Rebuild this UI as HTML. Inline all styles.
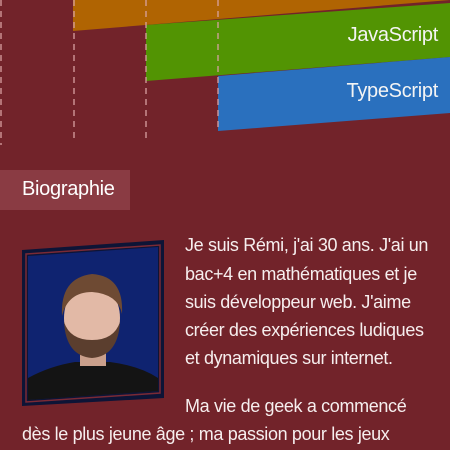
<!DOCTYPE html>
<html><head><meta charset="utf-8"><style>
html,body{margin:0;padding:0}
body{width:450px;height:450px;overflow:hidden;background:#72232a;position:relative;font-family:"Liberation Sans",Arial,sans-serif;color:#f6eeee}
.abs{position:absolute}
.t{position:absolute;white-space:nowrap;font-size:18px;letter-spacing:-0.35px;line-height:20px}
</style></head><body>
<svg class="abs" style="left:0;top:0" width="450" height="150">
<polygon points="73,0 450,0 450,0 73,31" fill="#b06402"/>
<polygon points="146,25 450,3 450,57 146,81" fill="#529403"/>
<polygon points="218,76 450,57 450,113 218,131" fill="#2a70be"/>
<g stroke="#d9a3a3" stroke-width="1.5" stroke-dasharray="6,5" opacity="0.85">
<line x1="1" y1="0" x2="1" y2="145"/>
<line x1="74" y1="0" x2="74" y2="142"/>
<line x1="146" y1="0" x2="146" y2="138"/>
<line x1="218" y1="0" x2="218" y2="131"/>
</g>
<text x="438" y="41" fill="#f4f4f4" font-size="20" text-anchor="end" font-family="Liberation Sans" letter-spacing="-0.3">JavaScript</text>
<text x="438" y="97" fill="#f4f4f4" font-size="20" text-anchor="end" font-family="Liberation Sans" letter-spacing="-0.3">TypeScript</text>
</svg>
<div class="abs" style="left:0;top:170px;width:130px;height:40px;background:#8a3b43"></div>
<div class="abs" style="left:22px;top:178px;font-size:20px;color:#fff;letter-spacing:-0.3px">Biographie</div>
<svg class="abs" style="left:20px;top:238px" width="146" height="172">
<polygon points="2,12 144,2 144,160 2,168" fill="#0d1436"/>
<polygon points="6,16 140,7 140,155 6,164" fill="none" stroke="#7a2a35" stroke-width="1.5"/>
<polygon points="8,18 138,9 138,153 8,162" fill="#0f2370"/>
<path d="M8,162 L8,140 Q30,128 55,124 L90,124 Q120,128 138,140 L138,153 Z" fill="#141414"/>
<rect x="60" y="100" width="26" height="28" fill="#caa08c"/>
<ellipse cx="72" cy="80" rx="28" ry="36" fill="#e2b9a6"/>
<path d="M44,84 Q46,118 72,120 Q98,118 100,84 Q94,102 72,102 Q50,102 44,84Z" fill="#5b3e2e"/>
<path d="M42,78 Q40,40 72,36 Q104,38 102,76 Q98,56 72,54 Q48,54 42,78Z" fill="#6e4a33"/>
</svg>
<div class="t" style="left:185px;top:235px">Je suis Rémi, j'ai 30 ans. J'ai un</div>
<div class="t" style="left:185px;top:264px">bac+4 en mathématiques et je</div>
<div class="t" style="left:185px;top:292px">suis développeur web. J'aime</div>
<div class="t" style="left:185px;top:320px">créer des expériences ludiques</div>
<div class="t" style="left:185px;top:348px">et dynamiques sur internet.</div>
<div class="t" style="left:185px;top:396px">Ma vie de geek a commencé</div>
<div class="t" style="left:22px;top:424px">dès le plus jeune âge ; ma passion pour les jeux</div>
</body></html>
